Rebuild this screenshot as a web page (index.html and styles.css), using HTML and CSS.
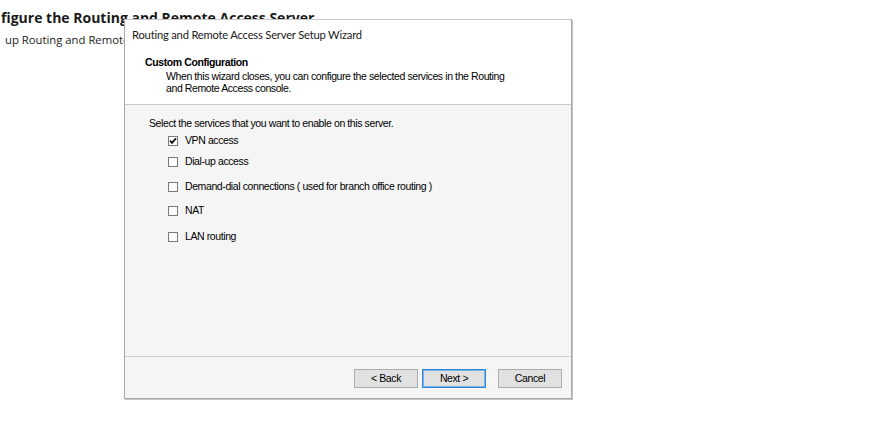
FILE: index.html
```html
<!DOCTYPE html>
<html>
<head>
<meta charset="utf-8">
<link rel="stylesheet" href="styles.css">
</head>
<body>
<div class="article">
  <h2 class="article-title">figure the Routing and Remote Access Server</h2>
  <p class="article-text">up Routing and Remote Access</p>
</div>
<div class="dialog">
  <div class="dialog-head">
    <div class="dialog-title">Routing and Remote Access Server Setup Wizard</div>
    <div class="page-title">Custom Configuration</div>
    <div class="page-desc">When this wizard closes, you can configure the selected services in the Routing<br>and Remote Access console.</div>
  </div>
  <div class="dialog-body">
    <div class="prompt">Select the services that you want to enable on this server.</div>
    <ul class="options">
      <li class="option opt-1"><span class="box checked"><svg viewBox="0 0 8 8" width="8" height="8"><path d="M1 3.6 L3 5.8 L7 1.4" fill="none" stroke="#111" stroke-width="1.8"/></svg></span>VPN access</li>
      <li class="option opt-2"><span class="box"></span>Dial-up access</li>
      <li class="option opt-3"><span class="box"></span>Demand-dial connections ( used for branch office routing )</li>
      <li class="option opt-4"><span class="box"></span>NAT</li>
      <li class="option opt-5"><span class="box"></span>LAN routing</li>
    </ul>
  </div>
  <div class="dialog-foot">
    <button class="btn">&lt; Back</button>
    <button class="btn btn-default">Next &gt;</button>
    <button class="btn btn-cancel">Cancel</button>
  </div>
</div>
</body>
</html>
```
FILE: styles.css
```css
html, body {
  margin: 0;
  padding: 0;
  background: #ffffff;
}
body {
  width: 891px;
  height: 423px;
  overflow: hidden;
  position: relative;
}
.article {
  padding: 8px 0 0 1px;
  font-family: "Open Sans", "DejaVu Sans", sans-serif;
  color: #1a1a1a;
}
.article-title {
  margin: 0;
  font-size: 14px;
  font-weight: 700;
  line-height: 20px;
  white-space: nowrap;
}
.article-text {
  margin: 4px 0 0 4px;
  width: 119px;
  overflow: hidden;
  font-size: 11.3px;
  line-height: 16px;
  white-space: nowrap;
}
.dialog {
  position: absolute;
  left: 124px;
  top: 19px;
  width: 446px;
  height: 378px;
  border: 1px solid #a8a8a8;
  border-top-color: #c8c8c8;
  box-shadow: 1px 1px 0 #c4c4c4;
  background: #f5f5f5;
  display: flex;
  flex-direction: column;
  font-family: "Liberation Sans", Arial, sans-serif;
  font-size: 10.5px;
  letter-spacing: -0.4px;
  color: #000;
}
.dialog-head {
  background: #ffffff;
  height: 84px;
  border-bottom: 1px solid #c9c9c9;
  padding: 0 0 0 7px;
}
.dialog-title {
  font-family: "Lato", "Open Sans", sans-serif;
  font-size: 11.2px;
  letter-spacing: -0.2px;
  line-height: 14px;
  margin-top: 8px;
  color: #1a1a1a;
}
.page-title {
  font-weight: 700;
  margin: 14px 0 0 13px;
  line-height: 13px;
}
.page-desc {
  margin: 1px 0 0 34px;
  line-height: 12px;
}
.dialog-body {
  flex: 1;
  padding: 12px 0 0 24px;
  border-bottom: 1px solid #cfcfcf;
}
.prompt {
  line-height: 13px;
}
.options {
  list-style: none;
  margin: 0;
  padding: 0 0 0 19px;
}
.option {
  display: flex;
  align-items: center;
  gap: 7px;
  height: 13px;
  line-height: 13px;
}
.opt-1 { margin-top: 4px; }
.opt-2 { margin-top: 8px; }
.opt-3 { margin-top: 12px; }
.opt-4 { margin-top: 11px; }
.opt-5 { margin-top: 13px; }
.box {
  width: 10px;
  height: 10px;
  border: 1px solid #7a7a7a;
  background: #fff;
  box-sizing: border-box;
  display: inline-flex;
  align-items: center;
  justify-content: center;
}
.box svg {
  display: block;
  width: 8px;
  height: 8px;
}
.dialog-foot {
  height: 41px;
  display: flex;
  align-items: flex-start;
  justify-content: flex-end;
  padding: 12px 9px 0 0;
  box-sizing: border-box;
  gap: 4px;
}
.btn {
  width: 64px;
  height: 19px;
  border: 1px solid #adadad;
  background: #e1e1e1;
  font-family: "Liberation Sans", Arial, sans-serif;
  font-size: 10.5px;
  letter-spacing: -0.4px;
  color: #000;
  padding: 0;
  line-height: 17px;
}
.btn-default {
  border-color: #2f86d6;
  box-shadow: inset 0 0 0 1px #78b4ea;
}
.btn-cancel {
  margin-left: 8px;
}
```
